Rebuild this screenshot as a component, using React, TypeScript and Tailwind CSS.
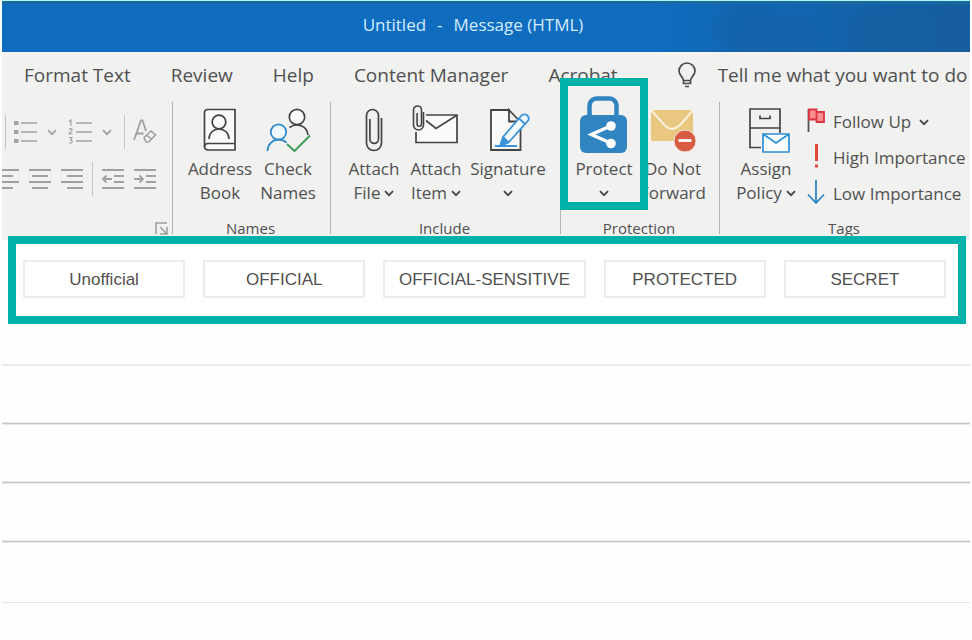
import type { ReactNode } from "react";

function Chevron({ className = "text-[#444444]" }: { className?: string }) {
  return (
    <svg className={className} width="10" height="7" viewBox="0 0 10 7" fill="none" stroke="currentColor" strokeWidth="1.8">
      <path d="M1 1.2 5 5.2 9 1.2" />
    </svg>
  );
}

function Bulb() {
  return (
    <svg width="18" height="26" viewBox="0 0 18 26" fill="none" stroke="#4a4a4a" strokeWidth="1.7">
      <path d="M5.500 18.500c0-3.500-4.500-4.500-4.500-9.500a8 8 0 0 1 16 0c0 5-4.500 6-4.500 9.500zM5.500 18.500v3h7v-3M7 24.500h4" />
    </svg>
  );
}

function Bullets() {
  return (
    <svg width="24" height="24" viewBox="0 0 24 24" stroke="#a3a3a3" strokeWidth="1.7">
      <path d="M8 3h16M8 12h16M8 21h16" />
      <path d="M1 3h4.500M1 12h4.500M1 21h4.500" strokeWidth="4" />
    </svg>
  );
}

function Numbers() {
  return (
    <svg width="24" height="26" viewBox="0 0 24 26" fill="none" stroke="#a3a3a3" strokeWidth="1.7">
      <path d="M8 4h16M8 13h16M8 22h16" />
      <path d="M1 2.500 3 1v6M1 10.500c1-1.500 3.500-1 3 .7-.3 1-2 1.800-3 3.500h3.500M1 18.500h3L2.500 21c2.500 0 2.500 3.500-1.500 3" strokeWidth="1.200" />
    </svg>
  );
}

function ClearFormat() {
  return (
    <svg width="24" height="26" viewBox="0 0 24 26" fill="none" stroke="#a0a0a0" strokeWidth="1.8">
      <path d="M1 21 8 1.500h1.500L13 12M3.500 14.500h7" />
      <path d="m11 18.500 7-6.500 4.500 4-7 7h-2.500zM13.500 16l5 4" fill="#f1f1f0" strokeWidth="1.600" />
    </svg>
  );
}

function Align({ d }: { d: string }) {
  return (
    <svg width="22" height="22" viewBox="0 0 22 22" fill="none" stroke="#a0a0a0" strokeWidth="1.8">
      <path d={d} />
    </svg>
  );
}

function AddressBookIcon() {
  return (
    <svg width="34" height="44" viewBox="0 0 34 44" fill="none" stroke="#444444" strokeWidth="1.7">
      <path d="M4.500 1.500H32v40.500H5a3.500 3.500 0 0 1-3.500-3.500v-34a3 3 0 0 1 3-3z" fill="#fafafa" />
      <path d="M1.500 39c0-2.500 1.500-3.500 3.500-3.500h27" />
      <circle cx="16" cy="14" r="6.800" />
      <path d="M6 31c0-6 4.500-10 10-10s10 4 10 10" />
    </svg>
  );
}

function CheckNamesIcon() {
  return (
    <svg width="46" height="44" viewBox="-1 0 46 44" fill="none" strokeWidth="1.700">
      <g stroke="#444444">
        <circle cx="31" cy="9" r="7.700" fill="#fafafa" />
        <path d="M23.500 19.500c7-5 17.500-2 18.500 7.500" />
      </g>
      <g stroke="#2b88c8">
        <circle cx="12.500" cy="24" r="7.700" fill="#eef8fe" />
        <path d="M1.500 43c0-6.500 5-11.300 11-11.300 3.500 0 6 1 8 3" />
      </g>
      <path d="m21 36 7.500 7L44 27.500" stroke="#3f9b5c" strokeWidth="2" />
    </svg>
  );
}

function ClipIcon() {
  return (
    <svg width="18" height="44" viewBox="0 0 18 44" fill="none" stroke="#444444" strokeWidth="1.700">
      <path d="M16.500 10v25a7.500 7.500 0 0 1-15 0V7.500a6 6 0 0 1 12 0V31a4.300 4.300 0 0 1-8.600 0V11" />
    </svg>
  );
}

function AttachItemIcon() {
  return (
    <svg width="48" height="47" viewBox="0 -2 48 47" fill="none" stroke="#444444" strokeWidth="1.700">
      <path d="M4 25v10.500h41V8H14" fill="#fafafa" />
      <path d="m14 13.500 10 8L44.500 8.500" />
      <path d="M11.500 5v13a5 5 0 0 1-10 0V3a4 4 0 0 1 8 0v14a2.200 2.200 0 0 1-4.400 0V6" strokeWidth="1.600" />
    </svg>
  );
}

function SignatureIcon() {
  return (
    <svg width="46" height="44" viewBox="-4 0 46 44" fill="none" strokeWidth="1.800">
      <path d="M21 2H2v40h29.500V14M20 2l11 11.500H20z" stroke="#444444" fill="#fafafa" />
      <path d="m14 29-3 9 8.500-3.500L39.500 12c1-4-2.500-7-6.500-5z" stroke="#3a94d6" fill="#f3faff" />
      <path d="m14 29-3 9 8.500-3.500z" fill="#3a94d6" />
      <path d="m14 29 5.500 5.500M30 10.500l6 5.500M6 38h22" stroke="#3a94d6" />
    </svg>
  );
}

function ProtectIcon() {
  return (
    <svg width="48" height="58" viewBox="1 -1 48 58" fill="none" className="overflow-visible">
      <path d="M10.500 22V10.500a7 7 0 0 1 7-7h13a7 7 0 0 1 7 7V22" stroke="#3084c0" strokeWidth="4.500" />
      <rect x="1" y="20" width="47" height="38" rx="6" fill="#3084c0" />
      <path d="m31.500 31-19 8.500 19 8.500" stroke="#ffffff" strokeWidth="3.500" />
      <circle cx="32" cy="31" r="4.800" fill="#ffffff" />
      <circle cx="32" cy="48.500" r="4.800" fill="#ffffff" />
    </svg>
  );
}

function DoNotForwardIcon() {
  return (
    <svg width="46" height="44" viewBox="0 -1 46 44" fill="none" className="overflow-visible">
      <path d="M1 1h42v31H1z" fill="#ebc881" />
      <path d="M1 1c12 13 15 19 21 19S32 14 43 1" stroke="#fbf3e2" strokeWidth="2" />
      <circle cx="35" cy="32" r="11" fill="#d85b43" stroke="#f3e6d8" />
      <path d="M28.500 31.500h13" stroke="#ffffff" strokeWidth="2.800" />
    </svg>
  );
}

function AssignPolicyIcon() {
  return (
    <svg width="48" height="46" viewBox="-6 -1 48 46" fill="none" strokeWidth="1.700" className="overflow-visible">
      <path d="M13 40.500H2V2h30v24M2 21h30M12 8.500v3h10v-3" stroke="#444444" />
      <path d="M15 27h26v18H15z" fill="#fafdff" stroke="#2b8fd0" />
      <path d="m15 27 13 9 13-9" stroke="#2b8fd0" />
    </svg>
  );
}

function FlagIcon() {
  return (
    <svg width="18" height="24" viewBox="0 0 18 24" fill="none" className="overflow-visible">
      <path d="M1.500-1v23" stroke="#555555" strokeWidth="1.800" />
      <path d="M2-.5h7.500v10H2zM9.500 2H17v10H9.500z" fill="#f98d92" stroke="#dc3440" strokeWidth="1.800" />
    </svg>
  );
}

function HighIcon() {
  return (
    <svg width="18" height="24" viewBox="0 0 18 24" className="overflow-visible">
      <path d="M8-2h3v17H8zM8 18.500h3v3H8z" fill="#dd4a3a" />
    </svg>
  );
}

function LowIcon() {
  return (
    <svg width="18" height="24" viewBox="0 2 18 24" fill="none" stroke="#2f87c4" strokeWidth="1.800" className="overflow-visible">
      <path d="M9 0v23M1 14.500 9 23l8-8.500" />
    </svg>
  );
}

function BigButton({ icon, first, second, menu, width }: { icon: ReactNode; first: string; second?: string; menu?: boolean; width: string }) {
  return (
    <button type="button" className={`flex shrink-0 flex-col items-center whitespace-nowrap text-[17px] leading-6 ${width}`}>
      <span className="flex h-[55px] items-end justify-center pb-[5px]">{icon}</span>
      <span>{first}</span>
      <span className="flex h-6 items-center gap-1">
        {second}
        {menu && <Chevron />}
      </span>
    </button>
  );
}

function TagButton({ icon, label, menu }: { icon: ReactNode; label: string; menu?: boolean }) {
  return (
    <button type="button" className="flex h-9 items-center gap-2 whitespace-nowrap text-[17px]">
      {icon}
      <span>{label}</span>
      {menu && <Chevron />}
    </button>
  );
}

function Group({ label, children }: { label: string; children: ReactNode }) {
  return (
    <section aria-label={label} className="relative flex h-[132px] min-w-0 flex-col justify-between border-l border-[#b4b4b4]">
      <div className="flex">{children}</div>
      <div className="h-4 pr-[2px] text-center text-[15px] leading-5">{label}</div>
    </section>
  );
}

const alignments = [
  { name: "Align left", d: "M0 2h22M0 8h16M0 14h22M0 20h16" },
  { name: "Center", d: "M0 2h22M3 8h16M0 14h22M3 20h16" },
  { name: "Align right", d: "M0 2h22M6 8h16M0 14h22M6 20h16" },
];
const indents = [
  { name: "Decrease indent", d: "M0 2h22M12 8h10M12 14h10M0 20h22M1 11h9M4.500 7.500 1 11l3.500 3.500" },
  { name: "Increase indent", d: "M0 2h22M12 8h10M12 14h10M0 20h22M0 11h9M5.500 7.500 9 11l-3.500 3.500" },
];
const tabs = ["Format Text", "Review", "Help", "Content Manager", "Acrobat"];
const labels = ["Unofficial", "OFFICIAL", "OFFICIAL-SENSITIVE", "PROTECTED", "SECRET"];

export default function App() {
  return (
    <div className="min-h-screen overflow-hidden bg-[#fdfefe] px-[2px] font-['Open_Sans','Noto_Sans',sans-serif] text-[#505050]">
      <header className="relative flex h-[52px] items-center justify-center overflow-hidden border-t border-[#b4f8f4] bg-[#0f6cbf] text-[17px] text-[#d3ecff]">
        <div className="absolute inset-y-0 right-0 w-1/3 bg-linear-to-r from-transparent to-[#155d9f]" />
        <div className="absolute top-1 right-[190px] h-12 w-[66px] rounded-full bg-[#1562a8]/60 blur-[2px]" />
        <div className="absolute top-4 right-[150px] h-10 w-[80px] rounded-full bg-[#1562a8]/60 blur-[2px]" />
        <div className="absolute top-2 -right-4 h-14 w-[140px] rounded-l-full bg-[#155d9f]/60 blur-[2px]" />
        <div className="absolute inset-x-0 top-0 h-[3px] bg-[#19699f]" />
        <h1 className="relative flex gap-[11px] pr-[26px] pb-1 whitespace-pre">
          <span>Untitled</span>
          <span>-</span>
          <span>Message (HTML)</span>
        </h1>
      </header>

      <div className="bg-[#f1f1f0]">
        <nav className="flex h-[50px] items-center border-t-2 border-[#f9f2ee] pb-[6px] pl-[22px] text-[19px] whitespace-nowrap">
          <div className="flex gap-10">
            {tabs.map((t) => (
              <button key={t} type="button">{t}</button>
            ))}
          </div>
          <button type="button" className="ml-[60px] flex items-center gap-[22px]">
            <Bulb />
            Tell me what you want to do
          </button>
        </nav>

        <div className="grid h-[138px] grid-cols-[170fr_158fr_230fr_159fr_251fr]">
          <div className="flex flex-col overflow-hidden">
            <div className="mt-[13px] flex h-[34px] items-center">
              <span className="ml-[3px] h-[34px] w-px bg-[#c4c4c4]" />
              <button type="button" aria-label="Bullets" className="ml-[7px] flex items-center gap-[10px]">
                <Bullets />
                <Chevron className="text-[#a3a3a3]" />
              </button>
              <button type="button" aria-label="Numbering" className="ml-[11px] flex items-center gap-[10px]">
                <Numbers />
                <Chevron className="text-[#a3a3a3]" />
              </button>
              <span className="ml-3 h-[34px] w-px bg-[#c4c4c4]" />
              <button type="button" aria-label="Clear formatting" className="ml-2">
                <ClearFormat />
              </button>
            </div>
            <div className="mt-[13px] -ml-[5px] flex h-[34px] items-center gap-[10px]">
              {alignments.map((a) => (
                <button key={a.name} type="button" aria-label={a.name}>
                  <Align d={a.d} />
                </button>
              ))}
              <span className="-mx-px h-[34px] w-px bg-[#c4c4c4]" />
              {indents.map((a) => (
                <button key={a.name} type="button" aria-label={a.name}>
                  <Align d={a.d} />
                </button>
              ))}
            </div>
            <button type="button" aria-label="Paragraph settings" className="mt-auto mr-1 mb-[5px] self-end">
              <svg width="13" height="13" viewBox="0 0 13 13" fill="none" stroke="#a0a0a0" strokeWidth="1.600">
                <path d="M1 12V1h11M5 5l6.500 6.500M12 5v7H5" />
              </svg>
            </button>
          </div>

          <Group label="Names">
            <BigButton icon={<AddressBookIcon />} first="Address" second="Book" width="ml-[13px] w-[68px]" />
            <BigButton icon={<CheckNamesIcon />} first="Check" second="Names" width="w-[68px]" />
          </Group>
          <Group label="Include">
            <BigButton icon={<ClipIcon />} first="Attach" second="File" menu width="ml-3 w-[62px]" />
            <BigButton icon={<AttachItemIcon />} first="Attach" second="Item" menu width="w-[62px]" />
            <BigButton icon={<SignatureIcon />} first="Signature" menu width="w-[82px]" />
          </Group>
          <Group label="Protection">
            <BigButton icon={<ProtectIcon />} first="Protect" menu width="ml-2 w-[70px]" />
            <BigButton icon={<DoNotForwardIcon />} first="Do Not" second="Forward" width="w-[68px]" />
            <div className="pointer-events-none absolute -top-6 -left-px h-[132px] w-[88px] border-8 border-[#00b2a9]" />
          </Group>
          <Group label="Tags">
            <BigButton icon={<AssignPolicyIcon />} first="Assign" second="Policy" menu width="ml-3 w-[68px]" />
            <div className="ml-[7px] flex flex-col pt-[2px]">
              <TagButton icon={<FlagIcon />} label="Follow Up" menu />
              <TagButton icon={<HighIcon />} label="High Importance" />
              <TagButton icon={<LowIcon />} label="Low Importance" />
            </div>
          </Group>
        </div>
      </div>

      <div className="relative -mt-1 mr-1 ml-[6px] grid grid-cols-[162fr_162fr_202fr_162fr_162fr] gap-[18px] border-8 border-[#00b2a9] bg-white pt-4 pr-3 pb-[18px] pl-[7px] font-['Liberation_Sans',Arial,sans-serif] text-[17px]">
        {labels.map((l) => (
          <button key={l} type="button" className="h-[38px] border-2 border-[#ececec] pt-px whitespace-nowrap">
            {l}
          </button>
        ))}
      </div>

      <div className="flex flex-col">
        <div className="h-[42px] border-b-2 border-[#e9ebeb]" />
        {[1, 2, 3].map((n) => (
          <div key={n} className="flex h-[59px] flex-col justify-end">
            <div className="h-[3px] border-y border-[#e9e9e9] bg-[#c6c6c6]" />
          </div>
        ))}
        <div className="h-[60px] border-b border-[#e4e5e6]" />
      </div>
    </div>
  );
}
